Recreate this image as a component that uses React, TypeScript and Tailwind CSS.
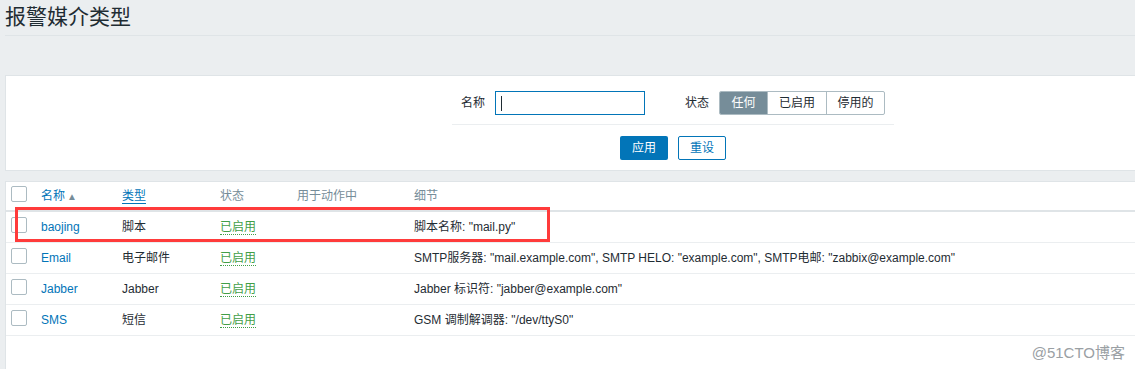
import React from "react";

const font = { fontFamily: '"Liberation Sans", Arial, "Noto Sans CJK SC", sans-serif' };

function Check() {
  return <span className="inline-block h-[16px] w-[16px] rounded-[2px] border border-[#acbbc2] bg-white" />;
}

const rows = [
  { name: "baojing", type: "脚本", detail: '脚本名称: "mail.py"' },
  { name: "Email", type: "电子邮件", detail: 'SMTP服务器: "mail.example.com", SMTP HELO: "example.com", SMTP电邮: "zabbix@example.com"' },
  { name: "Jabber", type: "Jabber", detail: 'Jabber 标识符: "jabber@example.com"' },
  { name: "SMS", type: "短信", detail: 'GSM 调制解调器: "/dev/ttyS0"' },
];

const cols = "grid grid-cols-[35px_81px_98px_77px_117px_1fr] items-center";

export default function App() {
  return (
    <div className="relative h-[369px] w-[1135px] overflow-hidden bg-[#ebeef0] text-[12px] text-[#1f2c33]" style={font}>
      <div className="pl-[5px]">
        <div className="flex h-[36px] items-center border-b border-[#dfe4e7] pb-[2px]">
          <h1 className="text-[21px] leading-none text-[#1f2c33]">报警媒介类型</h1>
        </div>
        <div className="mt-[39px] h-[96px] w-[1300px] border border-[#dfe4e7] bg-white">
          <div className="ml-[446px] w-[442px] pt-[15px]">
            <div className="flex h-[24px] items-center">
              <span className="ml-[9px] mr-[10px]">名称</span>
              <div className="flex h-[24px] w-[150px] items-center border border-[#0275b8] px-[5px]">
                <span className="h-[15px] w-[1px] bg-[#1f2c33]" />
              </div>
              <span className="ml-[40px] mr-[10px]">状态</span>
              <div className="flex h-[24px] overflow-hidden rounded-[2px] border border-[#acbbc2]">
                <span className="flex w-[47px] items-center justify-center bg-[#768d99] text-white">任何</span>
                <span className="flex w-[59px] items-center justify-center border-l border-[#acbbc2]">已启用</span>
                <span className="flex w-[58px] items-center justify-center border-l border-[#acbbc2]">停用的</span>
              </div>
            </div>
            <div className="mt-[9px] h-px bg-[#ebeef0]" />
            <div className="mt-[11px] flex pl-[168px]">
              <span className="flex h-[24px] w-[48px] items-center justify-center rounded-[2px] bg-[#0275b8] text-white">应用</span>
              <span className="ml-[10px] flex h-[24px] w-[48px] items-center justify-center rounded-[2px] border border-[#0275b8] text-[#0275b8]">重设</span>
            </div>
          </div>
        </div>
        <div className="mt-[10px] h-[190px] w-[1300px] border border-[#dfe4e7] bg-white">
          <div className={`${cols} h-[30px] border-b-2 border-[#dfe4e7] text-[#768d99]`}>
            <div className="pl-[5px] pt-[1px]"><Check /></div>
            <div className="text-[#0275b8]">名称<span className="ml-[2px] text-[10px] text-[#768d99]">▲</span></div>
            <div><span className="border-b border-[#0275b8] text-[#0275b8]">类型</span></div>
            <div>状态</div>
            <div>用于动作中</div>
            <div>细节</div>
          </div>
          {rows.map((r) => (
            <div key={r.name} className={`${cols} h-[31px] border-b border-[#ebeef0]`}>
              <div className="pl-[5px] pt-[1px]"><Check /></div>
              <div className="text-[#0275b8]">{r.name}</div>
              <div>{r.type}</div>
              <div><span className="border-b border-dotted border-[#429e47] text-[#429e47]">已启用</span></div>
              <div />
              <div className="whitespace-nowrap">{r.detail}</div>
            </div>
          ))}
        </div>
      </div>
      <div className="pointer-events-none absolute left-[15px] top-[207px] h-[35px] w-[535px] border-[3px] border-[#ff3b3b]" />
      <div className="absolute right-[10px] top-[342px] text-[15px] text-[#9aa0a4]">@51CTO博客</div>
    </div>
  );
}
